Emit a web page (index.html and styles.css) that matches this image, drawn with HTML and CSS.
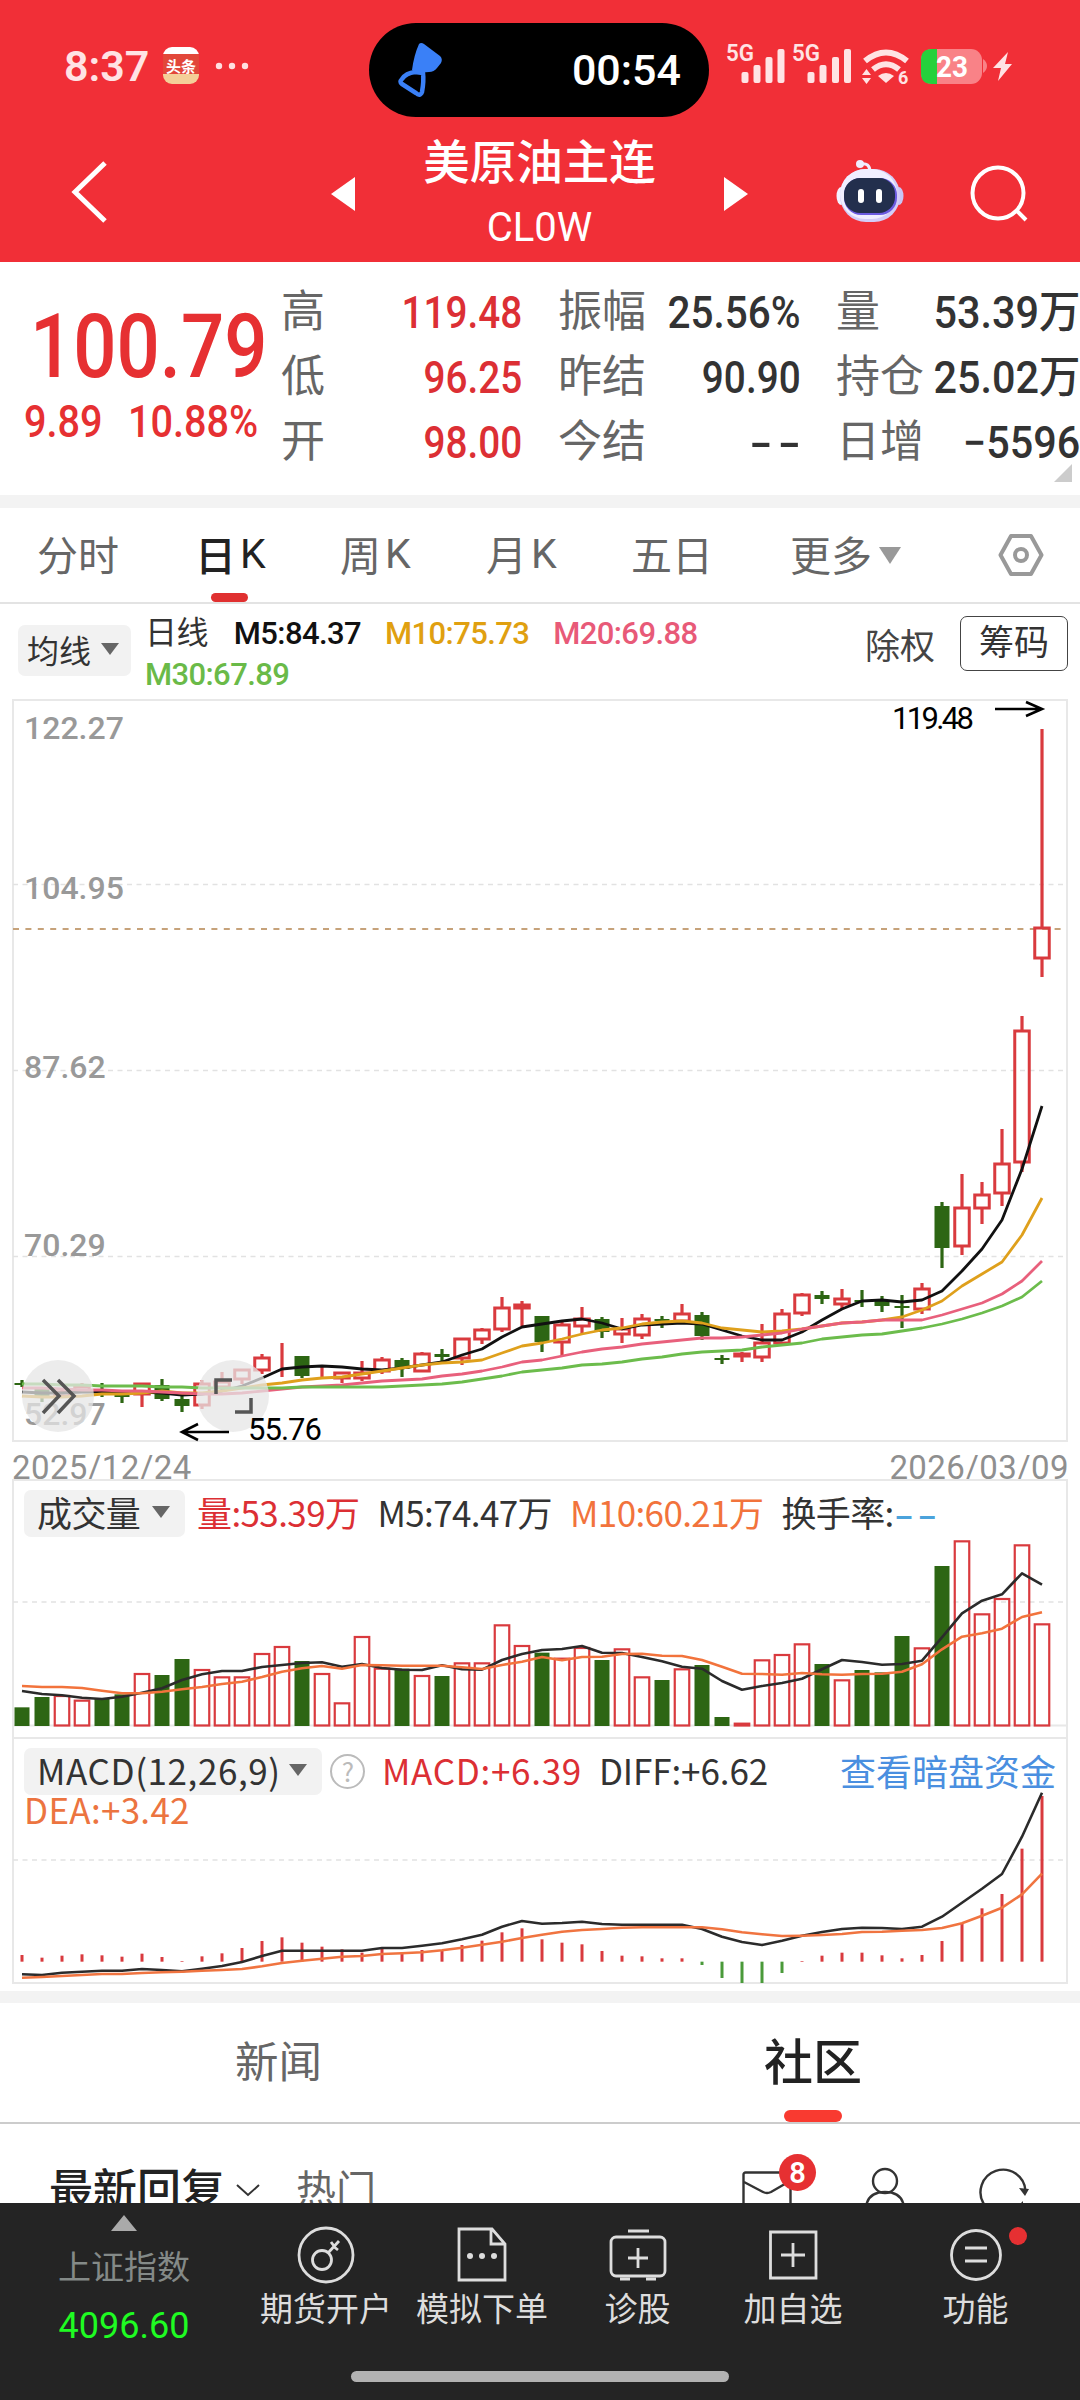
FILE: index.html
```
<!DOCTYPE html>
<html lang="zh-CN">
<head>
    <meta charset="UTF-8">
    <meta name="viewport" content="width=device-width, initial-scale=1.0">
    <title>美原油主连 CL0W</title>
    <link rel="stylesheet" href="styles.css">
</head>
<body>
<div class="screen">

    <header class="header">
        <!-- 状态栏 -->
        <div class="status">
            <span class="clock">8:37</span>
            <span class="app-icon"><b>头条</b></span>
            <svg class="dots" width="34" height="10" viewBox="0 0 34 10" fill="#ffdfe0"><circle cx="4" cy="5" r="3.2"/><circle cx="17" cy="5" r="3.2"/><circle cx="30" cy="5" r="3.2"/></svg>
            <div class="island">
                <svg width="50" height="58" viewBox="0 0 50 58">
                    <path d="M23 3 Q25 1 28 3 L44 15 Q47 18 45 22 L41 27 Q38 31 33 31 L20 32 L16 29 Q18 14 23 3Z" fill="#3a80f7"/>
                    <path d="M19 31 L27 32 Q28 40 26 51 Q24 56 20 52 L6 43 Q3 41 6 38 Q10 32 19 31Z" fill="none" stroke="#3a80f7" stroke-width="4.5"/>
                </svg>
                <span>00:54</span>
            </div>
            <svg class="signals" width="290" height="50" viewBox="724 40 290 50" fill="#ffe3e4">
                <text x="726" y="60" class="net" textLength="28" lengthAdjust="spacingAndGlyphs">5G</text>
                <rect x="741.5" y="71" width="7" height="11" rx="2"/><rect x="753.5" y="64" width="7" height="18" rx="2"/><rect x="765.5" y="56" width="7" height="26" rx="2"/><rect x="777.5" y="48" width="7" height="34" rx="2"/>
                <text x="792" y="60" class="net" textLength="28" lengthAdjust="spacingAndGlyphs">5G</text>
                <rect x="807.5" y="71" width="7" height="11" rx="2"/><rect x="819.5" y="64" width="7" height="18" rx="2"/><rect x="832" y="56" width="7" height="26" rx="2"/><rect x="844" y="48" width="7" height="34" rx="2"/>
                <g fill="none" stroke="#ffe3e4" stroke-width="6">
                    <path d="M865 60 Q886 43 907 60"/><path d="M873 68.5 Q886 58 899 68.5"/>
                </g>
                <path d="M878 75 Q886 69 894 75 L886 82Z"/>
                <path d="M862 74 L866.5 68 L871 74Z M862 77 L866.5 83 L871 77Z"/>
                <text x="898" y="83" font-size="18" font-weight="700">6</text>
                <rect x="921" y="48" width="61" height="35" rx="11" fill="#f98287"/>
                <path d="M983 58 Q987 61 987 65 Q987 69 983 72Z" fill="#f98287"/>
                <path d="M937 48 H932 Q921 48 921 59 V72 Q921 83 932 83 H937Z" fill="#25d13c"/>
                <text x="936" y="76" font-size="30" font-weight="700" fill="#fff" textLength="32" lengthAdjust="spacingAndGlyphs">23</text>
                <path d="M1008 51 L993 67 H1001 L998 80 L1012 63 H1005Z"/>
            </svg>
        </div>
        <!-- 导航栏 -->
        <div class="nav">
            <svg class="back" width="40" height="64" viewBox="0 0 40 64"><path d="M35 3 L5 32 L35 61" fill="none" stroke="#fff" stroke-width="5"/></svg>
            <svg class="prev" width="24" height="34" viewBox="0 0 24 34"><path d="M24 0 V34 L0 17Z" fill="#fff"/></svg>
            <div class="title">
                <h1>美原油主连</h1>
                <p>CL0W</p>
            </div>
            <svg class="next" width="24" height="34" viewBox="0 0 24 34"><path d="M0 0 V34 L24 17Z" fill="#fff"/></svg>
            <svg class="robot" width="72" height="68" viewBox="0 0 72 68">
                <path d="M26 8 Q36 6 36 16" fill="none" stroke="#f0ecff" stroke-width="3"/>
                <circle cx="26" cy="8" r="4" fill="#efedff"/>
                <ellipse cx="7" cy="40" rx="4.5" ry="9" fill="#f3f2ff"/><ellipse cx="65" cy="40" rx="4.5" ry="9" fill="#c9c4f4"/>
                <rect x="6" y="13" width="60" height="53" rx="26" fill="#d3cdf8"/>
                <rect x="6" y="13" width="57" height="50" rx="25" fill="#f0eeff"/>
                <rect x="10" y="22" width="53" height="37" rx="17" fill="#6b5be0"/>
                <rect x="10" y="22" width="51" height="35" rx="16" fill="#232f4d"/>
                <rect x="24" y="33" width="6" height="14" rx="3" fill="#fff"/><rect x="42" y="33" width="6" height="14" rx="3" fill="#fff"/>
            </svg>
            <svg class="search" width="62" height="62" viewBox="0 0 62 62" fill="none" stroke="#fff" stroke-width="4"><circle cx="29" cy="29" r="25.5"/><path d="M47 46 L57 56"/></svg>
        </div>
    </header>

    <!-- 报价 -->
    <section class="quote">
        <div class="price">
            <strong>100.79</strong>
            <div class="change"><span>9.89</span><span>10.88%</span></div>
        </div>
        <dl class="stats c1">
            <dt>高</dt><dd class="red">119.48</dd>
            <dt>低</dt><dd class="red">96.25</dd>
            <dt>开</dt><dd class="red">98.00</dd>
        </dl>
        <dl class="stats c2">
            <dt>振幅</dt><dd>25.56%</dd>
            <dt>昨结</dt><dd>90.90</dd>
            <dt>今结</dt><dd class="dash">--</dd>
        </dl>
        <dl class="stats c3">
            <dt>量</dt><dd>53.39万</dd>
            <dt>持仓</dt><dd>25.02万</dd>
            <dt>日增</dt><dd>−5596</dd>
        </dl>
        <i class="corner"></i>
    </section>

    <nav class="periods">
        <span>分时</span>
        <span class="on">日<em>K</em></span>
        <span>周<em>K</em></span>
        <span>月<em>K</em></span>
        <span>五日</span>
        <span>更多<i class="tri"></i></span>
        <svg width="46" height="44" viewBox="0 0 46 44" fill="none" stroke="#999" stroke-width="4"><path d="M13 3 H33 L43.5 22 L33 41 H13 L2.5 22Z" stroke-linejoin="round"/><circle cx="23" cy="22" r="6"/></svg>
    </nav>

    <div class="ma-row">
        <span class="chip ma-chip">均线<i class="tri"></i></span>
        <div class="ma-list">
            <span class="dk">日线</span>
            <span class="m5">M5:84.37</span>
            <span class="m10">M10:75.73</span>
            <span class="m20">M20:69.88</span>
            <span class="m30">M30:67.89</span>
        </div>
        <span class="adj">除权</span>
        <span class="chips-btn">筹码</span>
    </div>

    <!-- K线 -->
    <svg class="kline" width="1080" height="743" viewBox="0 699 1080 743">
        <rect class="frame" x="13" y="700" width="1054" height="741"/>
        <path class="grid" d="M13 884.5H1066M13 1070.5H1066M13 1256.5H1066"/>
        <path d="M13 929H1063" stroke="#c6a27a" stroke-width="2" stroke-dasharray="6 6.4"/>
        <g class="axis">
            <text x="24" y="739">122.27</text>
            <text x="24" y="899">104.95</text>
            <text x="24" y="1078">87.62</text>
            <text x="24" y="1256">70.29</text>
            <text x="24" y="1425">52.97</text>
        </g>
        <g id="candles"></g>
        <g id="averages"></g>
        <g class="float">
            <circle cx="58" cy="1396" r="36"/><circle cx="233" cy="1396" r="36"/>
            <path d="M43 1380 L59 1396 L43 1413M58 1380 L74 1396 L58 1413"/>
            <path d="M216 1394 V1380 H232M251 1398 V1412 H235"/>
        </g>
        <g class="mark">
            <path d="M995 709H1042M1026 702L1042 709L1026 716"/>
            <path d="M229 1432H182M198 1424L182 1432L198 1440"/>
            <text x="892" y="729" textLength="82">119.48</text>
            <text x="248" y="1440" textLength="74">55.76</text>
        </g>
    </svg>
    <div class="dates"><span>2025/12/24</span><span>2026/03/09</span></div>

    <!-- 成交量 -->
    <section class="panel volume">
        <div class="panel-head">
            <span class="chip">成交量<i class="tri"></i></span>
            <span class="red">量:53.39万</span>
            <span>M5:74.47万</span>
            <span class="orange">M10:60.21万</span>
            <span>换手率:<b>--</b></span>
        </div>
        <svg width="1080" height="258" viewBox="0 1479 1080 258">
            <path class="frame" d="M13 1737V1480H1067V1737M13 1725.5H1067"/>
            <path class="grid" d="M13 1602H1066"/>
            <g id="vol"></g>
        </svg>
    </section>

    <!-- MACD -->
    <section class="panel macd">
        <div class="panel-head">
            <span class="chip">MACD(12,26,9)<i class="tri"></i></span>
            <span class="help">?</span>
            <span class="red">MACD:+6.39</span>
            <span class="diff">DIFF:+6.62</span>
            <a>查看暗盘资金</a>
        </div>
        <div class="dea">DEA:+3.42</div>
        <svg width="1080" height="248" viewBox="0 1737 1080 248">
            <rect class="frame" x="13" y="1738" width="1054" height="245"/>
            <path class="grid" d="M13 1860H1066"/>
            <g id="macd"></g>
        </svg>
    </section>

    <nav class="tabs">
        <span>新闻</span>
        <span class="on">社区</span>
    </nav>

    <div class="sort">
        <strong>最新回复</strong>
        <svg class="down" width="26" height="14" viewBox="0 0 26 14"><path d="M2 2 L13 12 L24 2" fill="none" stroke="#333" stroke-width="2"/></svg>
        <span>热门</span>
        <div class="mail">
            <svg width="50" height="36" viewBox="0 0 50 36" fill="none" stroke="#333" stroke-width="2.4"><rect x="1.5" y="1.5" width="47" height="36" rx="2"/><path d="M2 11 L21 21 Q25 23 29 21 L48 10"/></svg>
            <i>8</i>
        </div>
        <svg class="user" width="44" height="38" viewBox="0 0 44 38" fill="none" stroke="#333" stroke-width="2.4"><circle cx="22" cy="14" r="12"/><path d="M3 40 Q5 25 22 25 Q39 25 41 40"/></svg>
        <svg class="reload" width="50" height="38" viewBox="0 0 50 38"><path d="M5.5 39 A22.5 22.5 0 1 1 46.5 25" fill="none" stroke="#333" stroke-width="2.4"/><path d="M40 22 L50 23 L46 30Z M42 37 L44 35 V38Z" fill="#333"/></svg>
    </div>

    <footer class="bar">
        <div class="index">
            <i class="up"></i>
            <span>上证指数</span>
            <b>4096.60</b>
        </div>
        <div class="item">
            <svg width="60" height="60" viewBox="0 0 60 60"><circle cx="30" cy="30" r="27"/><circle cx="26" cy="35" r="9.5"/><path d="M32 28 L43 16M37 21 L42 25M35 17 L38 21"/></svg>
            <span>期货开户</span>
        </div>
        <div class="item">
            <svg width="60" height="60" viewBox="0 0 60 60"><path d="M7 4 H40 L53 19 V55 H7ZM39 4 V19 H53"/><g fill="#ddd" stroke="none"><circle cx="18" cy="31" r="3"/><circle cx="30" cy="31" r="3"/><circle cx="42" cy="31" r="3"/></g></svg>
            <span>模拟下单</span>
        </div>
        <div class="item">
            <svg width="60" height="60" viewBox="0 0 60 60"><rect x="3" y="12" width="54" height="39" rx="5"/><path d="M20 6 H41M30 23 V43M20 33 H40M12 54 H22M38 54 H48"/></svg>
            <span>诊股</span>
        </div>
        <div class="item">
            <svg width="60" height="60" viewBox="0 0 60 60"><path d="M7.5 7 H53 V53 H7.5ZM30 18 V42M18 30 H42"/></svg>
            <span>加自选</span>
        </div>
        <div class="item">
            <svg width="60" height="60" viewBox="0 0 60 60"><circle cx="30" cy="30" r="24.5"/><path d="M19 23 H41M19 36 H41"/></svg>
            <span>功能</span>
            <i class="red-dot"></i>
        </div>
        <div class="home"></div>
    </footer>
</div>
<script src="chart.js"></script>
</body>
</html>
```

FILE: styles.css
```
* {
    box-sizing: border-box;
}
body {
    margin: 0;
    font-family: Roboto, "Noto Sans CJK SC", sans-serif;
    color: #333;
    background: #fff;
}
h1, p, dl, dd {
    margin: 0;
}
i, em {
    font-style: normal;
}
svg {
    display: block;
    flex: none;
}
.screen {
    width: 1080px;
    height: 2400px;
    overflow: hidden;
    display: flex;
    flex-direction: column;
}
.screen > * {
    flex: none;
}
.red { color: #dc2f34; }
.orange { color: #f2733c; }
.tri {
    width: 0;
    height: 0;
    border: 9px solid transparent;
    border-top: 12px solid #666;
    border-bottom: 0;
}

/* 顶部 */
.header {
    height: 262px;
    background: #f12f37;
    color: #fff;
}
.status {
    height: 131px;
    display: flex;
    align-items: center;
    padding-left: 64px;
}
.clock {
    width: 99px;
    font-size: 43px;
    font-weight: 600;
    color: #ffe3e4;
}
.app-icon {
    width: 36px;
    height: 37px;
    border-radius: 9px;
    background: linear-gradient(#fff 0 18%, #e2473a 18% 72%, #f4cf98 72%);
    display: flex;
    justify-content: center;
    align-items: center;
    overflow: hidden;
    font-size: 15px;
    color: #fff;
}
.dots {
    margin: 0 120px 0 16px;
}
.island {
    width: 340px;
    height: 94px;
    margin-top: 9px;
    border-radius: 47px;
    background: #000;
    display: flex;
    align-items: center;
    justify-content: space-between;
    padding: 0 28px 0 27px;
    font-size: 43px;
    font-weight: 500;
}
.signals {
    margin-left: 15px;
    overflow: visible;
}
.net {
    font-size: 23px;
    font-weight: 600;
}
.nav {
    height: 131px;
    display: flex;
    align-items: center;
    padding: 0 0 9px 70px;
}
.back { margin-right: 221px; }
.prev { margin-top: 4px; }
.title {
    width: 369px;
    text-align: center;
}
.title h1 {
    font-size: 46.5px;
    line-height: 66px;
    font-weight: 500;
    padding-top: 3px;
}
.title p {
    font-size: 40px;
    line-height: 58px;
    margin-top: 3px;
}
.next { margin: 4px 86px 0 0; }
.robot {
    margin-right: 63px;
    margin-top: -5px;
}
.search { margin-top: 6px; }

/* 报价 */
.quote {
    position: relative;
    height: 233px;
    display: flex;
}
.price {
    width: 281px;
    padding: 37px 0 0 30px;
    color: #e63032;
}
.price strong {
    display: inline-block;
    font-size: 89px;
    line-height: 96px;
    font-weight: 500;
    transform: scaleX(0.855);
    transform-origin: left;
}
.change {
    display: flex;
    margin-left: -6px;
    font-size: 44px;
    line-height: 54px;
    font-weight: 500;
}
.change span {
    transform: scaleX(0.9);
    transform-origin: left;
}
.change span:first-child { width: 104px; }
.stats {
    display: grid;
    grid-template-columns: auto auto;
    grid-auto-rows: 65px;
    justify-content: space-between;
    align-items: center;
    padding-top: 18px;
    font-size: 44px;
    white-space: nowrap;
}
.stats dt {
    width: 88px;
    color: #666;
    line-height: 60px;
    margin-top: -2px;
}
.stats dd {
    font-size: 44px;
    font-weight: 500;
    line-height: 60px;
    text-align: right;
    transform: scaleX(0.88);
    transform-origin: right;
}
.c1 { width: 242px; }
.c2 { width: 244px; margin-left: 36px; }
.c3 { width: 244px; margin-left: 35px; }
.c3 dd { transform: scaleX(0.94); }
.c2 dd:nth-of-type(1) { transform: scaleX(0.92); }
.stats .dash {
    transform: scaleX(1.5);
    letter-spacing: 4px;
    margin-right: -6px;
}
.corner {
    position: absolute;
    right: 8px;
    bottom: 13px;
    border-left: 18px solid transparent;
    border-bottom: 18px solid #ccc;
}

/* 周期 */
.periods {
    height: 109px;
    border-top: 13px solid #f3f3f3;
    border-bottom: 2px solid #e3e3e3;
    padding-left: 37px;
    display: grid;
    grid-template-columns: 158px 145px 146px 145px 159px 208px 46px;
    align-items: center;
    font-size: 41px;
    color: #666;
}
.periods span {
    display: flex;
    align-items: center;
    height: 94px;
    padding-bottom: 4px;
}
.periods em { margin: 2px 0 0 4px; }
.periods .on {
    position: relative;
    color: #222;
    font-weight: 500;
}
.periods .on em { font-weight: 400; }
.periods .on::after {
    content: "";
    position: absolute;
    left: 16px;
    bottom: 0;
    width: 37px;
    height: 9px;
    border-radius: 5px;
    background: #e03030;
}
.periods .tri {
    border-width: 17px 11px 0;
    border-top-color: #999;
    margin: 4px 0 0 7px;
}

/* 均线 */
.ma-row {
    height: 95px;
    display: flex;
    align-items: flex-start;
    padding-left: 18px;
    font-size: 32px;
}
.chip {
    display: flex;
    align-items: center;
    justify-content: space-between;
    border-radius: 7px;
    background: #f2f2f2;
    color: #333;
}
.ma-chip {
    width: 113px;
    height: 51px;
    margin-top: 21px;
    padding: 0 12px 4px 9px;
}
.ma-list {
    width: 719px;
    padding: 9px 120px 0 14px;
    display: flex;
    flex-wrap: wrap;
    column-gap: 24px;
    line-height: 41px;
    font-size: 31px;
    letter-spacing: -0.6px;
    font-weight: 500;
}
.ma-list .dk {
    font-weight: 400;
    font-size: 32px;
    margin-right: 2px;
}
.m5 { color: #111; }
.m10 { color: #e0a010; }
.m20 { color: #e85a78; }
.m30 { color: #6aba48; }
.adj {
    width: 110px;
    padding-left: 15px;
    font-size: 35px;
    line-height: 50px;
    margin-top: 19px;
    color: #444;
}
.chips-btn {
    width: 108px;
    height: 55px;
    margin-top: 12px;
    border: 1.5px solid #444;
    border-radius: 7px;
    text-align: center;
    font-size: 35px;
    line-height: 54px;
}

/* 图表 */
.frame {
    fill: none;
    stroke: #e8e8e8;
    stroke-width: 2;
}
.grid {
    stroke: #e2e2e2;
    stroke-width: 1.5;
    stroke-dasharray: 5 4.5;
}
.axis {
    font-size: 32px;
    font-weight: 500;
    fill: #999;
}
.float circle {
    fill: #e6e6e6;
    fill-opacity: 0.75;
}
.float path {
    fill: none;
    stroke: #555;
    stroke-width: 3.5;
}
.mark {
    font-size: 31px;
}
.mark path {
    fill: none;
    stroke: #000;
    stroke-width: 2.6;
}
.dates {
    height: 37px;
    display: flex;
    justify-content: space-between;
    padding: 4px 11px 0 12px;
    font-size: 33px;
    line-height: 43px;
    letter-spacing: 0.4px;
    color: #8f8f8f;
}
.panel {
    position: relative;
}
.panel-head {
    position: absolute;
    left: 24px;
    right: 24px;
    top: 11px;
    height: 47px;
    display: flex;
    align-items: center;
    font-family: "Noto Sans CJK SC", sans-serif;
    font-size: 35px;
    letter-spacing: -0.6px;
    line-height: 44px;
    white-space: nowrap;
}
.panel-head > * {
    padding-bottom: 3px;
}
.panel-head .chip {
    height: 47px;
    padding: 0 15px 3px 13px;
}
.volume {
    height: 258px;
}
.volume .chip {
    width: 161px;
    margin-right: 12px;
}
.volume .panel-head > span + span { margin-right: 18px; }
.volume b {
    display: inline-block;
    font-weight: 500;
    color: #4ba3dc;
    letter-spacing: 2px;
    transform: scaleX(1.6);
    transform-origin: left;
}
.macd {
    height: 254px;
}
.macd .chip {
    width: 298px;
    margin-right: 8px;
    letter-spacing: 0.6px;
}
.macd .panel-head > .red {
    margin: 0 17px 0 17px;
    letter-spacing: 0.7px;
}
.macd .diff { letter-spacing: -0.1px; }
.panel-head .help {
    width: 35px;
    height: 35px;
    padding: 0;
    border: 2.5px solid #bbb;
    border-radius: 50%;
    font-size: 26px;
    line-height: 29px;
    text-align: center;
    color: #bbb;
}
.macd a {
    margin-left: auto;
    color: #4a8fe0;
    font-size: 36px;
    letter-spacing: 0;
}
.dea {
    position: absolute;
    left: 24px;
    top: 48px;
    font-family: "Noto Sans CJK SC", sans-serif;
    font-size: 35px;
    letter-spacing: 0.3px;
    line-height: 47px;
    color: #ec7440;
}

/* 社区 */
.tabs {
    height: 133px;
    border-top: 12px solid #f3f3f3;
    border-bottom: 2px solid #ccc;
    display: flex;
    font-size: 43.5px;
    line-height: 121px;
    color: #666;
}
.tabs span {
    position: relative;
    width: 557px;
    height: 119px;
    text-align: center;
}
.tabs .on {
    width: 512px;
    font-size: 49px;
    font-weight: 500;
    color: #222;
}
.tabs .on::after {
    content: "";
    position: absolute;
    left: 227px;
    bottom: 0;
    width: 58px;
    height: 12px;
    border-radius: 6px;
    background: #f93a30;
}
.sort {
    height: 79px;
    overflow: hidden;
    display: flex;
    align-items: flex-start;
    padding: 33px 0 0 49px;
    font-size: 40px;
    line-height: 68px;
    color: #666;
}
.sort strong {
    font-size: 44px;
    font-weight: 500;
    color: #222;
}
.down { margin: 26px 35px 0 10px; }
.sort > span { width: 446px; }
.mail {
    position: relative;
    margin-top: 14px;
}
.mail i {
    position: absolute;
    left: 37px;
    top: -17px;
    width: 37px;
    height: 37px;
    border-radius: 50%;
    background: #e63032;
    color: #fff;
    font-size: 29px;
    font-weight: 600;
    line-height: 38px;
    text-align: center;
}
.user { margin: 10px 0 0 71px; }
.reload { margin: 9px 0 0 72px; }

/* 底部栏 */
.bar {
    position: relative;
    height: 197px;
    background: #242424;
    color: #ddd;
    display: grid;
    grid-template-columns: 248px 156px 156px 155px 156px 209px;
    font-size: 33px;
    line-height: 40px;
}
.index, .item {
    display: flex;
    flex-direction: column;
    align-items: center;
}
.index {
    color: #848a88;
}
.up {
    margin: 12px 0 17px;
    border: 13px solid transparent;
    border-top: 0;
    border-bottom: 16px solid #aaa;
}
.index b {
    margin-top: 18px;
    font-size: 36px;
    font-weight: 400;
    color: #1ffb22;
}
.item {
    position: relative;
    padding-top: 22px;
}
.item svg {
    margin-bottom: 5px;
    fill: none;
    stroke: #ddd;
    stroke-width: 2.8;
}
.red-dot {
    position: absolute;
    right: 53px;
    top: 24px;
    width: 18px;
    height: 18px;
    border-radius: 50%;
    background: #e63032;
}
.home {
    position: absolute;
    left: 351px;
    bottom: 18px;
    width: 378px;
    height: 11px;
    border-radius: 6px;
    background: #b2b2b2;
}
```

FILE: chart.js
```
const RED = '#d93a3e';
const GREEN = '#2d6613';
const x = i => 22 + i * 20;

// [涨跌, 最高, 实体上, 实体下, 最低]
const candles = [
    ['g', 1380, 1383, 1385, 1387], ['g', 1387, 1389, 1398, 1402], ['r', 1390, 1392, 1396, 1398], ['r', 1383, 1387, 1391, 1393],
    ['g', 1383, 1391, 1393, 1397], ['g', 1391, 1394, 1397, 1403], ['r', 1383, 1384, 1394, 1407], ['g', 1379, 1385, 1399, 1401],
    ['g', 1395, 1399, 1406, 1412], ['r', 1380, 1384, 1405, 1409], ['r', 1372, 1382, 1387, 1390], ['r', 1370, 1370, 1379, 1384],
    ['r', 1354, 1358, 1370, 1374], ['r', 1343, 1356, 1356, 1377], ['g', 1356, 1356, 1376, 1378], ['r', 1365, 1375, 1375, 1379],
    ['r', 1372, 1373, 1378, 1383], ['r', 1361, 1373, 1378, 1381], ['r', 1357, 1360, 1371, 1374], ['g', 1358, 1360, 1369, 1377],
    ['r', 1352, 1354, 1371, 1371], ['g', 1349, 1354, 1357, 1361], ['r', 1338, 1339, 1358, 1365], ['r', 1328, 1330, 1339, 1344],
    ['r', 1297, 1308, 1329, 1332], ['r', 1301, 1305, 1308, 1326], ['g', 1316, 1316, 1342, 1352], ['r', 1322, 1325, 1342, 1355],
    ['r', 1307, 1319, 1326, 1334], ['g', 1317, 1319, 1332, 1338], ['r', 1318, 1329, 1334, 1343], ['r', 1314, 1319, 1335, 1339],
    ['g', 1316, 1319, 1321, 1328], ['r', 1304, 1314, 1321, 1321], ['g', 1312, 1315, 1336, 1340], ['g', 1355, 1358, 1360, 1364],
    ['r', 1352, 1354, 1356, 1362], ['r', 1324, 1343, 1357, 1362], ['r', 1309, 1314, 1343, 1344], ['r', 1293, 1295, 1313, 1316],
    ['g', 1291, 1295, 1299, 1304], ['r', 1289, 1299, 1304, 1309], ['g', 1290, 1300, 1302, 1307], ['g', 1296, 1301, 1306, 1312],
    ['g', 1295, 1306, 1308, 1328], ['r', 1283, 1289, 1309, 1314], ['g', 1202, 1206, 1248, 1268], ['r', 1174, 1208, 1246, 1255],
    ['r', 1182, 1195, 1208, 1224], ['r', 1129, 1164, 1193, 1206], ['r', 1016, 1031, 1162, 1172], ['r', 729, 928, 958, 977]
];

const ma5 = [1392, 1393, 1393, 1392, 1392, 1392, 1392, 1393, 1395, 1394, 1391, 1386, 1378, 1369, 1367, 1366, 1367, 1369, 1370, 1368, 1365, 1362, 1355, 1349, 1337, 1327, 1324, 1321, 1319, 1323, 1329, 1325, 1324, 1323, 1324, 1330, 1336, 1340, 1340, 1332, 1320, 1309, 1301, 1300, 1302, 1300, 1291, 1271, 1249, 1220, 1169, 1106];
const ma10 = [1396, 1397, 1397, 1396, 1394, 1394, 1393, 1391, 1393, 1393, 1391, 1388, 1385, 1383, 1380, 1378, 1377, 1374, 1371, 1368, 1365, 1363, 1362, 1360, 1353, 1346, 1343, 1339, 1334, 1330, 1328, 1324, 1322, 1321, 1323, 1328, 1330, 1332, 1331, 1329, 1326, 1323, 1322, 1320, 1317, 1310, 1301, 1286, 1274, 1262, 1235, 1198];
const ma20 = [1388, 1388, 1389, 1390, 1390, 1391, 1391, 1392, 1393, 1394, 1394, 1393, 1391, 1389, 1387, 1386, 1385, 1383, 1381, 1380, 1379, 1376, 1374, 1371, 1367, 1362, 1360, 1356, 1352, 1349, 1347, 1344, 1342, 1340, 1338, 1338, 1337, 1335, 1333, 1329, 1326, 1323, 1322, 1320, 1320, 1320, 1315, 1309, 1303, 1294, 1281, 1261];
const ma30 = [1384, 1384, 1385, 1385, 1386, 1386, 1386, 1387, 1387, 1388, 1388, 1388, 1388, 1388, 1387, 1387, 1387, 1387, 1387, 1386, 1385, 1384, 1382, 1379, 1376, 1372, 1370, 1368, 1365, 1364, 1362, 1359, 1357, 1354, 1352, 1351, 1350, 1347, 1345, 1343, 1339, 1337, 1335, 1334, 1331, 1328, 1324, 1319, 1313, 1306, 1297, 1281];

// 成交量, 单位 1/3 px
const vol = 'g682 g651 r648 r662 g655 g643 r582 g585 g537 r570 r592 r592 r522 r501 g543 r582 r670 r471 r566 g566 r588 g588 r550 r550 r436 r498 g518 r536 r504 g540 r508 r592 g600 r568 g555 g711 r731 r541 r525 r493 g552 r601 g570 g577 g468 r505 g258 r184 r403 r357 r196 r433'.split(' ');
const vol5 = [633, 642, 646, 653, 657, 650, 638, 625, 600, 583, 573, 573, 561, 555, 549, 547, 560, 552, 564, 569, 570, 556, 568, 569, 540, 522, 510, 507, 498, 518, 519, 531, 544, 560, 566, 603, 629, 618, 609, 596, 568, 540, 546, 554, 552, 542, 472, 400, 362, 343, 280, 314];
const vol10 = [618, 621, 621, 624, 632, 640, 640, 635, 628, 621, 612, 605, 591, 575, 565, 558, 566, 555, 556, 557, 557, 557, 562, 567, 555, 545, 531, 541, 531, 530, 522, 521, 527, 528, 540, 560, 581, 582, 584, 579, 583, 584, 582, 581, 575, 553, 508, 470, 460, 446, 411, 397];

const hist = [645, 653, 647, 643, 646, 650, 641, 651, 663, 649, 640, 624, 603, 592, 608, 620, 628, 638, 625, 638, 630, 630, 615, 602, 577, 565, 598, 608, 613, 633, 647, 649, 655, 655, 675, 714, 729, 729, 699, 663, 647, 638, 638, 646, 655, 645, 603, 550, 505, 462, 326, 168];
const diff = [703, 705, 698, 695, 692, 692, 687, 690, 694, 686, 678, 666, 648, 632, 632, 632, 632, 632, 624, 624, 617, 610, 598, 584, 560, 543, 551, 549, 545, 552, 554, 554, 554, 554, 567, 590, 606, 615, 602, 587, 576, 567, 563, 564, 567, 560, 530, 488, 446, 402, 290, 158];
const dea = [713, 711, 708, 705, 702, 702, 699, 697, 695, 692, 690, 687, 679, 669, 662, 656, 650, 648, 642, 640, 637, 631, 623, 614, 605, 594, 584, 575, 570, 567, 563, 562, 562, 562, 562, 568, 577, 583, 588, 587, 585, 582, 576, 575, 572, 570, 564, 550, 527, 503, 463, 401];

function line(data, color, width) {
    const points = data.map((y, i) => x(i) + ',' + y.toFixed(1)).join(' ');
    return `<polyline points="${points}" fill="none" stroke="${color}" stroke-width="${width}" stroke-linejoin="round"/>`;
}

function rect(cx, w, top, bottom, fill) {
    return `<rect x="${cx - w / 2}" y="${top}" width="${w}" height="${bottom - top}" fill="${fill}"/>`;
}

function hollow(cx, w, top, bottom, stroke, sw) {
    return `<rect x="${cx - w / 2}" y="${top}" width="${w}" height="${bottom - top}" fill="none" stroke="${stroke}" stroke-width="${sw}"/>`;
}

// K线
document.getElementById('candles').innerHTML = candles.map(([c, high, top, bottom, low], i) => {
    const color = c === 'r' ? RED : GREEN;
    const wicks = rect(x(i), 3.2, high, top, color) + rect(x(i), 3.2, bottom, low, color);
    return wicks + (c === 'r' ? hollow(x(i), 14.5, top, bottom, color, 3) : rect(x(i), 15, top, bottom, color));
}).join('');

document.getElementById('averages').innerHTML =
    line(ma5, '#111', 2.8) + line(ma10, '#dfa01c', 2.8) + line(ma20, '#e8607c', 2.8) + line(ma30, '#6cbc4c', 2.8);

// 成交量
const vy = v => 1480 + v / 3;
document.getElementById('vol').innerHTML = vol.map((s, i) => {
    const top = vy(Number(s.slice(1)));
    return s[0] === 'r' ? hollow(x(i), 14.5, top, 1725.5, RED, 2.2) : rect(x(i), 15, top, 1726, GREEN);
}).join('') + line(vol5.map(vy), '#2b2b2b', 2.6) + line(vol10.map(vy), '#f2733c', 2.6);

// MACD
const my = v => 1740 + v / 3;
document.getElementById('macd').innerHTML = hist.map((v, i) => {
    return v < 665 ? rect(x(i), 3, my(v), my(665), RED) : rect(x(i), 3, my(665), my(v), '#4a9a3a');
}).join('') + line(diff.map(my), '#2b2b2b', 2.6) + line(dea.map(my), '#f07440', 2.6);
```
